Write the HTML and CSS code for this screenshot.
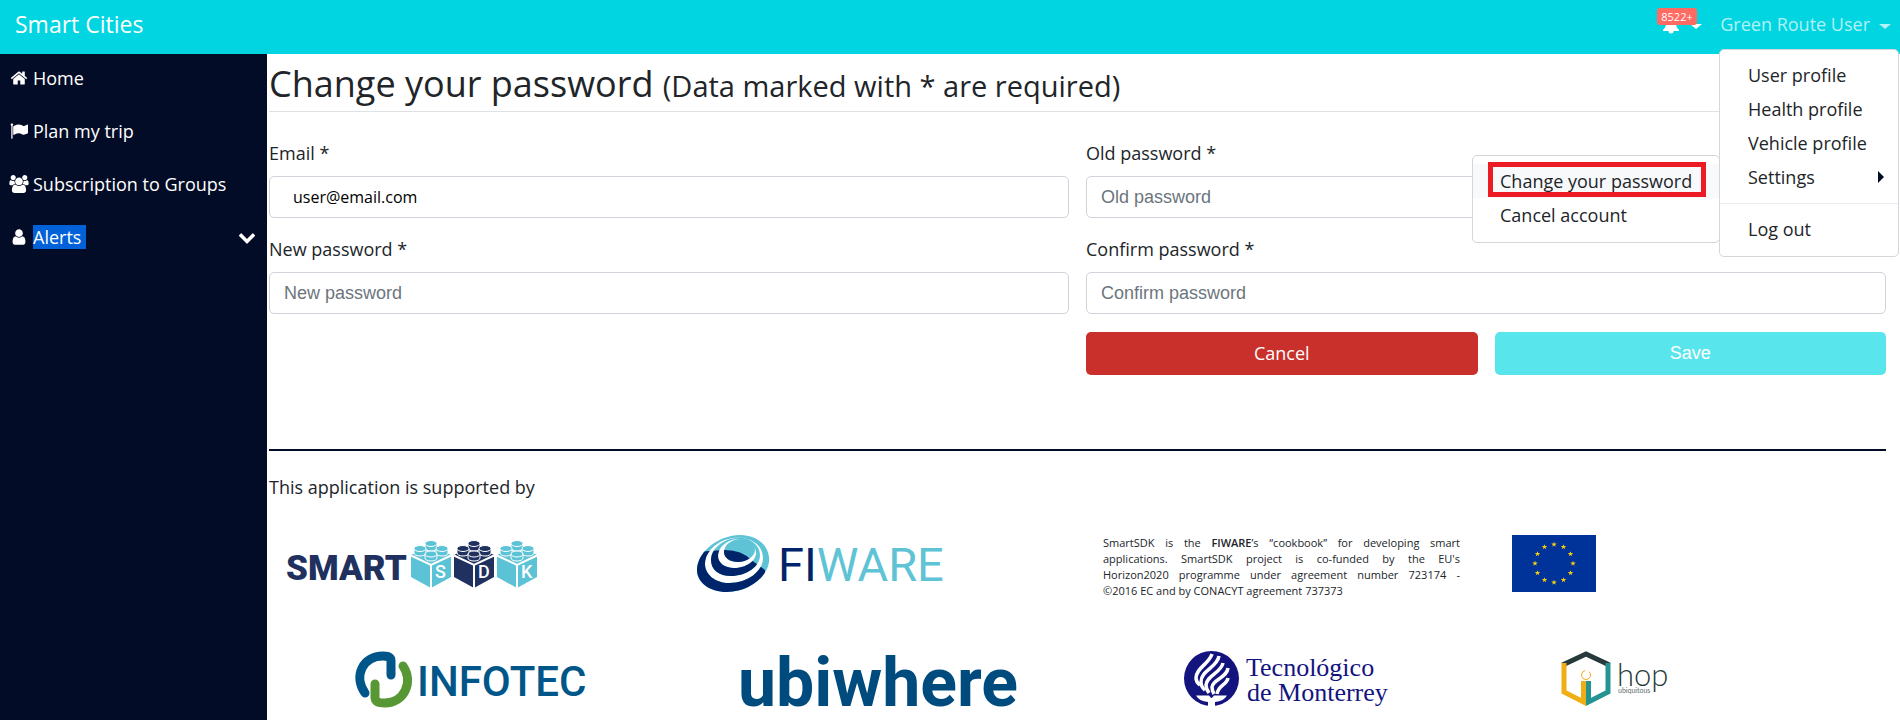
FILE: index.html
```html
<!DOCTYPE html>
<html lang="en">
<head>
<meta charset="utf-8">
<meta name="viewport" content="width=device-width, initial-scale=1">
<title>Smart Cities</title>
<link rel="stylesheet" href="styles.css">
</head>
<body>
<header class="topbar">
  <a class="brand" href="#">Smart Cities</a>
  <nav class="topnav" aria-label="Account">
    <button class="alerts" type="button" aria-label="Notifications">
      <svg class="bell" viewBox="0 0 16 18" aria-hidden="true"><path fill="#fff" d="M8 0c1 0 1.400.6 1.400 1.500 2.300.6 3.600 2.300 3.600 5 0 4 1 5.600 3 7.500v1H10.500a2.500 2.500 0 0 1-5 0H0v-1c2-1.900 3-3.500 3-7.500 0-2.700 1.300-4.400 3.600-5C6.600.6 7 0 8 0z"/></svg>
      <span class="caret"></span>
      <span class="badge">8522+</span>
    </button>
    <div class="account">
      <button class="account-toggle" type="button" aria-expanded="true">Green Route User <span class="caret"></span></button>
      <ul class="menu">
        <li><a href="#">User profile</a></li>
        <li><a href="#">Health profile</a></li>
        <li><a href="#">Vehicle profile</a></li>
        <li class="has-sub">
          <a href="#">Settings <span class="caret-right"></span></a>
          <ul class="menu submenu">
            <li class="marked"><a class="active" href="#">Change your password</a></li>
            <li><a href="#">Cancel account</a></li>
          </ul>
        </li>
        <li class="divider"></li>
        <li><a href="#">Log out</a></li>
      </ul>
    </div>
  </nav>
</header>

<div class="layout">
  <nav class="sidebar" aria-label="Main">
    <a href="#"><svg class="icon" viewBox="0 0 1792 1792" aria-hidden="true"><path d="M1472 992v480q0 26-19 45t-45 19h-384v-384h-256v384h-384q-26 0-45-19t-19-45v-480q0-1 .5-3t.5-3l575-474 575 474q1 2 1 6zm223-69l-62 74q-8 9-21 11h-3q-13 0-21-7l-692-577-692 577q-12 8-24 7-13-2-21-11l-62-74q-8-10-7-23.500t11-21.500l719-599q32-26 76-26t76 26l244 204v-195q0-14 9-23t23-9h192q14 0 23 9t9 23v408l219 182q10 8 11 21.500t-7 23.500z"/></svg><span>Home</span></a>
    <a href="#"><svg class="icon" viewBox="0 0 1792 1792" aria-hidden="true"><path d="M320 256q0 72-64 110v1266q0 13-9.500 22.500t-22.500 9.500h-64q-13 0-22.500-9.500t-9.500-22.500v-1266q-64-38-64-110 0-53 37.500-90.500t90.500-37.500 90.500 37.500 37.500 90.500zm1472 64v763q0 25-12.500 38.500t-39.500 27.500q-215 116-369 116-61 0-123.500-22t-108.500-48-115.500-48-142.500-22q-192 0-464 146-17 9-33 9-26 0-45-19t-19-45v-742q0-32 31-55 21-14 79-43 236-120 421-120 107 0 200 29t219 88q38 19 88 19 54 0 117.500-21t110-47 88-47 54.500-21q26 0 45 19t19 45z"/></svg><span>Plan my trip</span></a>
    <a href="#"><svg class="icon" viewBox="64 0 1920 1792" aria-hidden="true"><path d="M657 896q-162 5-265 128h-134q-82 0-138-40.500t-56-118.500q0-353 124-353 6 0 43.500 21t97.500 42.500 119 21.500q67 0 133-23-5 37-5 66 0 139 81 256zm1071 637q0 120-73 189.500t-194 69.500h-874q-121 0-194-69.500t-73-189.500q0-53 3.500-103.500t14-109 26.500-108.500 43-97.500 62-81 85.500-53.500 111.500-20q10 0 43 21.500t73 48 107 48 135 21.500 135-21.500 107-48 73-48 43-21.500q61 0 111.500 20t85.500 53.500 62 81 43 97.500 26.500 108.500 14 109 3.500 103.500zm-1024-1277q0 106-75 181t-181 75-181-75-75-181 75-181 181-75 181 75 75 181zm704 384q0 159-112.500 271.500t-271.500 112.500-271.500-112.500-112.500-271.500 112.500-271.500 271.500-112.500 271.500 112.500 112.500 271.500zm576 225q0 78-56 118.500t-138 40.500h-134q-103-123-265-128 81-117 81-256 0-29-5-66 66 23 133 23 59 0 119-21.500t97.500-42.500 43.500-21q124 0 124 353zm-128-609q0 106-75 181t-181 75-181-75-75-181 75-181 181-75 181 75 75 181z"/></svg><span>Subscription to Groups</span></a>
    <a href="#"><svg class="icon" viewBox="0 0 1792 1792" aria-hidden="true"><path d="M1536 1399q0 109-62.500 187t-150.500 78h-854q-88 0-150.500-78t-62.500-187q0-85 8.500-160.500t31.500-152 58.500-131 94-89 134.500-34.500q131 128 313 128t313-128q76 0 134.500 34.500t94 89 58.500 131 31.500 152 8.500 160.500zm-256-887q0 159-112.500 271.500t-271.500 112.500-271.500-112.500-112.500-271.500 112.500-271.500 271.500-112.500 271.500 112.500 112.500 271.500z"/></svg><span class="selected">Alerts</span><svg class="icon chevron" viewBox="0 0 1792 1792" aria-hidden="true"><path d="M1683 808l-742 741q-19 19-45 19t-45-19l-742-741q-19-19-19-45.500t19-45.500l166-165q19-19 45-19t45 19l531 531 531-531q19-19 45-19t45 19l166 165q19 19 19 45.500t-19 45.500z"/></svg></a>
  </nav>

  <main class="content">
    <h1>Change your password <small>(Data marked with * are required)</small></h1>
    <form class="form">
      <div class="field"><label for="email">Email *</label><input class="email" id="email" type="email" value="user@email.com"></div>
      <div class="field"><label for="old">Old password *</label><input id="old" type="password" placeholder="Old password"></div>
      <div class="field"><label for="new">New password *</label><input id="new" type="password" placeholder="New password"></div>
      <div class="field"><label for="confirm">Confirm password *</label><input id="confirm" type="password" placeholder="Confirm password"></div>
      <div class="actions">
        <button class="btn cancel" type="button">Cancel</button>
        <button class="btn save" type="submit" disabled>Save</button>
      </div>
    </form>

    <footer class="support">
      <p class="support-title">This application is supported by</p>
      <div class="logos first">
        <svg class="sdk" width="252" height="57" viewBox="0 0 252 57" role="img" aria-label="Smart SDK">
          <defs>
            <g id="brick">
              <path d="M0 15 20 5l20 10v22L20 48 0 37z"/>
              <g stroke="#fff" stroke-width="1">
                <path d="M14 4v4c0 4 12 4 12 0V4z"/><ellipse cx="20" cy="3.500" rx="6" ry="3"/>
                <path d="M3 9v4c0 4 12 4 12 0V9z"/><ellipse cx="9" cy="8.500" rx="6" ry="3"/>
                <path d="M25 9v4c0 4 12 4 12 0V9z"/><ellipse cx="31" cy="8.500" rx="6" ry="3"/>
                <path d="M14 14v4c0 4 12 4 12 0v-4z"/><ellipse cx="20" cy="14" rx="6" ry="3"/>
              </g>
              <path d="M0 15.500 20 25l20-9.500M20 25v23" fill="none" stroke="#fff" stroke-width="2"/>
            </g>
          </defs>
          <text class="w-smart" x="0" y="45">SMART</text>
          <use href="#brick" x="125" y="5" fill="#5cc2d6"/>
          <use href="#brick" x="168" y="5" fill="#20315f"/>
          <use href="#brick" x="211" y="5" fill="#5cc2d6"/>
          <text class="w-face" x="149" y="43">S</text>
          <text class="w-face" x="192" y="43">D</text>
          <text class="w-face" x="235" y="43">K</text>
        </svg>
        <svg class="fiware" width="248" height="57" viewBox="0 0 248 57" role="img" aria-label="Fiware">
          <defs><clipPath id="fw"><path d="M0 17 12 16 28 15Q45 15 54 25L60 29 68 35V57H0z"/></clipPath></defs>
          <g>
            <g fill="#5fc3d6">
              <path fill-rule="evenodd" d="M34 1C52-3 70 5 72 22 74 39 54 57 30 57 12 57 0 47 0 35 0 20 15 5 34 1zM36 3C21 5 8 16 8 29c0 11 11 19 24 19 19 0 34-12 34-25C66 9 52 1 36 3z"/>
              <path fill-rule="evenodd" d="M38 3c13-2 25 6 25 17 0 12-14 21-29 21-12 0-20-6-20-16C14 14 25 5 38 3zM40 4c-11 1-19 9-19 17 0 7 7 12 16 12 12 0 22-7 22-15 0-9-9-15-19-14z"/>
              <path d="M42 4c9-1 16 4 16 11 0 6-8 12-17 12-8 0-14-4-14-10 0-7 7-12 15-13z"/>
            </g>
            <g fill="#00246a" clip-path="url(#fw)">
              <path fill-rule="evenodd" d="M34 1C52-3 70 5 72 22 74 39 54 57 30 57 12 57 0 47 0 35 0 20 15 5 34 1zM36 3C21 5 8 16 8 29c0 11 11 19 24 19 19 0 34-12 34-25C66 9 52 1 36 3z"/>
              <path fill-rule="evenodd" d="M38 3c13-2 25 6 25 17 0 12-14 21-29 21-12 0-20-6-20-16C14 14 25 5 38 3zM40 4c-11 1-19 9-19 17 0 7 7 12 16 12 12 0 22-7 22-15 0-9-9-15-19-14z"/>
              <path d="M42 4c9-1 16 4 16 11 0 6-8 12-17 12-8 0-14-4-14-10 0-7 7-12 15-13z"/>
            </g>
          </g>
          <text class="w-fiware" x="81" y="46">FI<tspan fill="#5fc3d6">WARE</tspan></text>
        </svg>
        <p class="funding">SmartSDK is the <strong>FIWARE</strong>’s “cookbook” for developing smart applications. SmartSDK project is co-funded by the EU's Horizon2020&nbsp;programme under agreement number 723174 - ©2016&nbsp;EC and by CONACYT agreement 737373</p>
        <svg class="eu" width="84" height="57" viewBox="0 0 84 57" role="img" aria-label="European Union">
          <defs><path id="star" fill="#f5cb12" d="M0-2.800.7-.9 2.700-.9 1.100.4 1.700 2.300 0 1.100-1.700 2.300-1.100.4-2.700-.9-.7-.9z"/></defs>
          <path fill="#039" d="M0 0h84v57H0z"/>
          <use href="#star" x="42" y="9.500"/><use href="#star" x="51.500" y="12"/><use href="#star" x="58.500" y="19"/><use href="#star" x="61" y="28.500"/><use href="#star" x="58.500" y="38"/><use href="#star" x="51.500" y="45"/><use href="#star" x="42" y="47.500"/><use href="#star" x="32.500" y="45"/><use href="#star" x="25.500" y="38"/><use href="#star" x="23" y="28.500"/><use href="#star" x="25.500" y="19"/><use href="#star" x="32.500" y="12"/>
        </svg>
      </div>
      <div class="logos second">
        <svg width="232" height="57" viewBox="0 0 232 57" role="img" aria-label="Infotec">
          <g fill="none" stroke-width="9" stroke-linecap="round" stroke-linejoin="round">
            <path stroke="#005689" d="M10 42C-2 25 8 5 28 5Q36 5 36 10V24"/>
            <path stroke="#579835" d="M48 15C59 31 49 52 30 52 23 52 20 51 20 46V33"/>
          </g>
          <text class="w-infotec" x="62" y="45">INFOTEC</text>
        </svg>
        <svg class="ubi" width="276" height="57" viewBox="0 0 276 57" role="img" aria-label="Ubiwhere">
          <text class="w-ubi" x="-2" y="55">ubiwhere</text>
        </svg>
        <svg class="tec" width="208" height="57" viewBox="0 0 208 57" role="img" aria-label="Tecnológico de Monterrey">
          <circle cx="27.500" cy="27.500" r="27.500" fill="#14147f"/>
          <g fill="none" stroke="#fff" stroke-width="3.500">
            <path d="M28 3C25 13 12 17 12 27Q12 31 16 34"/>
            <path d="M35 5C33 17 17 19 17 31Q17 36 21 39"/>
            <path d="M39 12C37 22 23 24 22 34Q22 38 25 42"/>
            <path d="M44 17C43 27 29 28 28 36Q28 40 30 43"/>
            <path d="M44 27C43 34 34 34 33 43"/>
          </g>
          <path fill="#fff" d="M12 44.500H25Q27 47 27.500 47 28 47 30 44.500H43Q40 50 31 51V57H24V51Q15 50 12 44.500z"/>
          <text class="w-tec" x="62" y="25">Tecnológico</text>
          <text class="w-tec" x="63" y="50">de Monterrey</text>
        </svg>
        <svg class="hop" width="106" height="57" viewBox="0 0 106 57" role="img" aria-label="Hop Ubiquitous">
          <g fill="none" stroke-width="5">
            <path stroke="#263a3b" d="M1.500 14 25 3 48.500 14"/>
            <path stroke="#efae14" d="M3 12V41L22.500 51V30"/>
            <path stroke="#239492" d="M47 12V41L27.500 51V30"/>
            <circle cx="25" cy="24" r="4.500" stroke="#efae14" stroke-width="1" stroke-dasharray="20 4"/>
          </g>
          <text class="w-hop" x="56" y="35">hop</text>
          <text class="w-hopsub" x="57" y="42">ubiquitous</text>
        </svg>
      </div>
    </footer>
  </main>
</div>
</body>
</html>
```

FILE: styles.css
```css
* { box-sizing: border-box; }

body {
  margin: 0;
  min-height: 100vh;
  display: flex;
  flex-direction: column;
  background: #fff;
  color: #212529;
  font: 18px/27px "Open Sans", "Noto Sans", sans-serif;
}

a { color: inherit; text-decoration: none; }
button, input { font: inherit; color: inherit; }
svg { display: block; flex: none; overflow: visible; }

/* Top bar */
.topbar {
  display: flex;
  justify-content: space-between;
  align-items: center;
  height: 54px;
  padding: 0 9px 5px 15px;
  background: #00d5e1;
  color: #fff;
}
.brand { font-size: 23px; }
.topnav { display: flex; align-items: center; gap: 18px; }
.topnav button { border: 0; padding: 0; background: none; }
.alerts { position: relative; display: flex; align-items: center; gap: 11px; }
.bell { width: 16px; height: 18px; }
.badge {
  position: absolute;
  left: -6px;
  top: -8px;
  padding: 0 4px;
  border-radius: 3px;
  background: #ff6b63;
  color: #fff;
  font-size: 11px;
  line-height: 17px;
}
.caret {
  display: inline-block;
  margin-top: 4px;
  border: 6px solid transparent;
  border-top: 5px solid currentColor;
  border-bottom: 0;
}
.account { position: relative; }
.topnav .account-toggle { display: flex; align-items: center; gap: 9px; color: rgba(255, 255, 255, .7); }

/* Menus */
.menu {
  position: absolute;
  z-index: 2;
  top: 38px;
  right: -8px;
  width: 180px;
  margin: 0;
  padding: 8px 0 10px;
  list-style: none;
  background: #fff;
  border: 1px solid #d5d6d9;
  border-radius: 5px;
  color: #212529;
}
.menu a {
  display: flex;
  justify-content: space-between;
  align-items: center;
  height: 34px;
  padding: 0 14px 0 28px;
  white-space: nowrap;
}
.menu .divider { height: 1px; margin: 9px 0 8px; background: #e9ecef; }
.has-sub { position: relative; }
.submenu { top: -5px; right: 100%; width: 248px; }
.submenu a { padding-left: 27px; }
.menu .active { background: #f8f9fa; }
.marked { position: relative; }
.marked::after {
  content: "";
  position: absolute;
  inset: -2px 13px 1px 15px;
  border: 5px solid #ed1c24;
}
.caret-right {
  border: 6px solid transparent;
  border-left-color: #030c26;
  border-right: 0;
}

/* Layout */
.layout { display: flex; flex: 1; }
.sidebar {
  flex: none;
  width: 267px;
  background: #030c26;
  color: #fff;
}
.sidebar a {
  display: flex;
  align-items: center;
  gap: 4px;
  height: 53px;
  padding: 0 10px 5px 9px;
}
.icon { width: 20px; height: 18px; fill: #fff; }
.chevron { margin-left: auto; }
.selected { padding-right: 5px; line-height: 24px; background: #0061d8; }

.content { flex: 1; min-width: 0; padding: 8px 14px 10px 2px; }
h1 {
  margin: 0 0 28px;
  padding-bottom: 6px;
  border-bottom: 1px solid #dee2e6;
  font-size: 36px;
  line-height: 43px;
  font-weight: 400;
}
h1 small { font-size: 29px; line-height: 29px; }

/* Form */
.form {
  display: grid;
  grid-template-columns: 1fr 1fr;
  gap: 18px 17px;
}
.field { display: flex; flex-direction: column; gap: 9px; }
.field input {
  width: 100%;
  height: 42px;
  padding: 0 14px;
  border: 1px solid #ced4da;
  border-radius: 5px;
  background: #fff;
  font-family: "Liberation Sans", Arial, sans-serif;
}
.field input::placeholder { color: #6c757d; opacity: 1; }
.field .email {
  padding-left: 23px;
  color: #000;
  font-family: "Open Sans", "Noto Sans", sans-serif;
  font-size: 16px;
}
.actions {
  grid-column: 2;
  display: grid;
  grid-template-columns: 1fr 1fr;
  gap: 17px;
}
.btn { height: 43px; border: 0; border-radius: 5px; color: #fff; }
.cancel { background: #c9302c; }
.save { background: #59e5ec; font-family: "Liberation Sans", Arial, sans-serif; }

/* Supporters */
.support { margin-top: 74px; padding-top: 23px; border-top: 2px solid #030c26; }
.support-title { margin: 0 0 34px; }
.logos { display: grid; grid-template-columns: 3fr 3fr 3fr 2fr 1fr; }
.first { height: 57px; padding-left: 17px; }
.second { margin-top: 59px; justify-items: center; }
.fiware { margin-left: 11px; }
.funding {
  margin: 0 26px 0 17px;
  font-size: 11px;
  line-height: 16px;
  text-align: justify;
}
.funding strong { font-weight: 600; }
.eu { margin-left: 26px; }
.ubi { margin-left: 6px; }
.tec { margin-left: 16px; }
.hop { margin-right: 6px; }

/* Wordmarks */
.w-smart { font: 900 35px Roboto, sans-serif; fill: #20315f; }
.w-face { font: 500 18px Roboto, sans-serif; fill: #fff; }
.w-fiware { font: 400 47px Roboto, sans-serif; fill: #00246a; }
.w-infotec { font: 500 42px Roboto, sans-serif; fill: #005689; }
.w-ubi { font: 700 68px Roboto, sans-serif; fill: #004b7d; }
.w-tec { font: 26px "Liberation Serif", serif; fill: #14147f; }
.w-hop { font: 300 31px Lato, sans-serif; fill: #263a3b; }
.w-hopsub { font: 7px Lato, sans-serif; fill: #607070; }
```
